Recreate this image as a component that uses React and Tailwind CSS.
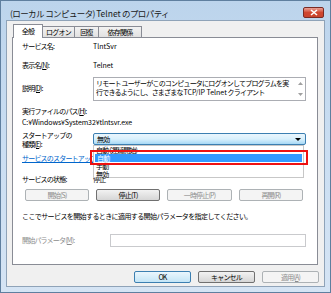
import React from "react";

function Btn({ children, disabled, def, className = "" }) {
  return (
    <div
      className={
        "h-[12px] flex items-center justify-center rounded-[2px] border text-[7px] leading-none " +
        (def
          ? "border-[#3c7fb1] bg-gradient-to-b from-[#eaf6fd] to-[#c4e5f6] text-black "
          : disabled
          ? "border-[#adb2b5] bg-[#f4f4f4] text-[#8d8d8d] "
          : "border-[#707070] bg-gradient-to-b from-[#f2f2f2] to-[#d6d6d6] text-black ") +
        className
      }
    >
      {children}
    </div>
  );
}

export default function App() {
  return (
    <div className="w-[331px] h-[293px] flex flex-col bg-gradient-to-b from-[#bcd4ec] via-[#cadef2] to-[#d5e4f4] border border-[#5f7f9f] font-['Noto_Sans_CJK_JP',sans-serif] tracking-[-0.8px] text-black overflow-hidden">
      {/* title bar */}
      <div className="h-[19px] shrink-0 flex items-start relative">
        <div className="pl-[9px] pt-[6px] text-[8.5px] leading-[12px] tracking-[-0.6px] text-[#1a1a1a]">
          (ローカル コンピュータ) <span className="tracking-normal">Telnet</span> のプロパティ
        </div>
        <div className="ml-auto mr-[6px] mt-[6px] w-[21px] h-[11px] rounded-[2px] border border-[#7a2a24] bg-gradient-to-b from-[#e8a096] via-[#d0462f] to-[#c8442e] flex items-center justify-center">
          <svg width="8" height="7" viewBox="0 0 8 7">
            <path d="M1 1 L7 6 M7 1 L1 6" stroke="#fff" strokeWidth="1.6" />
          </svg>
        </div>
      </div>
      <div className="flex-1 flex px-[5px] pb-[5px]">
        <div className="flex-1 bg-[#f0f0f0] border border-[#8fa3b8] flex flex-col">
          {/* tabs */}
          <div className="h-[16px] shrink-0 flex items-end pl-[6px] text-[7px] leading-none">
            <div className="w-[30px] h-[14px] bg-white border border-b-0 border-[#898c95] flex items-center justify-center relative top-[1px] z-10">
              全般
            </div>
            <div className="w-[32px] h-[11px] border border-b-0 border-l-0 border-[#898c95] bg-gradient-to-b from-[#f2f2f2] to-[#e1e1e1] flex items-center justify-center">
              ログオン
            </div>
            <div className="w-[24px] h-[11px] border border-b-0 border-l-0 border-[#898c95] bg-gradient-to-b from-[#f2f2f2] to-[#e1e1e1] flex items-center justify-center">
              回復
            </div>
            <div className="w-[43px] h-[11px] border border-b-0 border-l-0 border-[#898c95] bg-gradient-to-b from-[#f2f2f2] to-[#e1e1e1] flex items-center justify-center">
              依存関係
            </div>
          </div>
          {/* panel */}
          <div className="ml-[5px] mr-[6px] h-[228px] bg-white border border-[#898c95] pl-[9px] flex flex-col text-[7px]">
            <div className="mt-[3px] h-[10px] leading-[10px] flex">
              <div className="w-[71px]">サービス名:</div>
              <div className="tracking-normal">TlntSvr</div>
            </div>
            <div className="mt-[9px] h-[10px] leading-[10px] flex">
              <div className="w-[71px]">表示名(<span className="underline">N</span>):</div>
              <div className="tracking-normal">Telnet</div>
            </div>
            <div className="mt-[7px] h-[24px] flex">
              <div className="w-[71px] pt-[6px] leading-[10px]">説明(<span className="underline">D</span>):</div>
              <div className="w-[213px] h-[24px] border border-[#abadb3] bg-white flex">
                <div className="flex-1 pl-[2px] pt-[1px] text-[7px] leading-[9px] tracking-[-0.8px] whitespace-nowrap overflow-hidden">
                  <div>リモート ユーザーがこのコンピュータにログオンしてプログラムを実</div>
                  <div>
                    行できるようにし、さまざまな <span className="tracking-normal">TCP/IP Telnet</span> クライアント
                  </div>
                </div>
                <div className="w-[9px] flex flex-col items-center justify-between py-[4px]">
                  <svg width="5" height="3" viewBox="0 0 5 3"><path d="M0 3 L2.5 0 L5 3Z" fill="#a0a0a0" /></svg>
                  <svg width="5" height="3" viewBox="0 0 5 3"><path d="M0 0 L2.5 3 L5 0Z" fill="#a0a0a0" /></svg>
                </div>
              </div>
            </div>
            <div className="mt-[5px] h-[10px] leading-[10px]">
              実行ファイルのパス(<span className="underline">H</span>):
            </div>
            <div className="mt-[1px] h-[10px] leading-[10px] text-[7px] tracking-[-0.1px]">
              C:¥Windows¥System32¥tlntsvr.exe
            </div>
            <div className="mt-[4px] h-[18px] flex">
              <div className="w-[71px] leading-[9px]">
                <div>スタートアップの</div>
                <div>種類(<span className="underline">E</span>):</div>
              </div>
              <div className="relative mt-[2px] w-[213px] h-[12px]">
                <div className="w-full h-full rounded-[2px] border border-[#3c7fb1] bg-gradient-to-b from-[#eaf6fd] via-[#d9f0fc] to-[#a7d9f5] flex items-center pl-[3px] leading-none">
                  <span>無効</span>
                  <svg className="ml-auto mr-[4px]" width="6" height="3" viewBox="0 0 6 3">
                    <path d="M0 0 L6 0 L3 3Z" fill="#000" />
                  </svg>
                </div>
                {/* dropdown list */}
                <div className="absolute left-0 top-[12px] w-[211px] h-[33px] bg-white border border-[#c7c7c7] z-20 flex flex-col text-[7px] leading-[8px]">
                  <div className="h-[8px] pl-[2px] whitespace-nowrap">自動 (遅延開始)</div>
                  <div className="h-[8px] pl-[2px] mx-[1px] bg-[#3399ff] text-white">自動</div>
                  <div className="h-[8px] pl-[2px]">手動</div>
                  <div className="h-[8px] pl-[2px]">無効</div>
                </div>
                {/* red highlight box */}
                <div className="absolute left-[-3px] top-[17px] w-[218px] h-[15px] border-2 border-[#ee1111] z-30" />
              </div>
            </div>
            <div className="mt-[4px] h-[10px] leading-[10px] w-[284px] overflow-hidden whitespace-nowrap text-[#0066cc] underline">
              サービスのスタートアップ オプションの設定についての詳細を表示します。
            </div>
            <div className="mt-[11px] h-[10px] leading-[10px] flex">
              <div className="w-[71px]">サービスの状態:</div>
              <div>停止</div>
            </div>
            <div className="mt-[5px] ml-[3px] flex gap-[7px]">
              <Btn disabled className="w-[64px]">開始(S)</Btn>
              <Btn className="w-[64px]">停止(T)</Btn>
              <Btn disabled className="w-[65px]">一時停止(P)</Btn>
              <Btn disabled className="w-[64px]">再開(R)</Btn>
            </div>
            <div className="mt-[10px] h-[10px] leading-[10px] whitespace-nowrap tracking-[-0.6px]">
              ここでサービスを開始するときに適用する開始パラメータを指定してください。
            </div>
            <div className="mt-[13px] h-[13px] flex items-center">
              <div className="w-[88px] text-[#8d8d8d]">
                開始パラメータ(<span className="underline">M</span>):
              </div>
              <div className="w-[196px] h-[13px] border border-[#c9cacd] bg-white" />
            </div>
          </div>
          {/* bottom buttons */}
          <div className="mt-[6px] mr-[5px] flex justify-end gap-[7px]">
            <Btn def className="w-[57px]">OK</Btn>
            <Btn className="w-[57px]">キャンセル</Btn>
            <Btn disabled className="w-[57px]">適用(<span className="underline">A</span>)</Btn>
          </div>
        </div>
      </div>
    </div>
  );
}
